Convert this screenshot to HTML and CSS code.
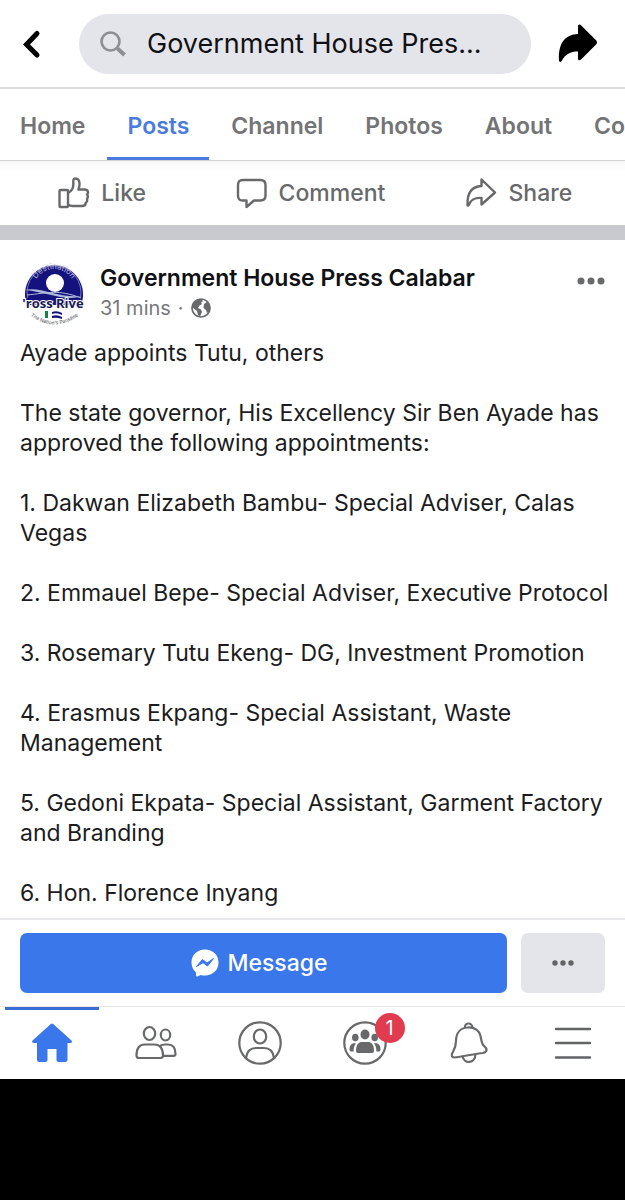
FILE: index.html
```html
<!DOCTYPE html>
<html lang="en">
<head>
    <meta charset="UTF-8">
    <meta name="viewport" content="width=device-width, initial-scale=1.0">
    <title>Government House Press Calabar - Posts</title>
    <link rel="stylesheet" href="styles.css">
</head>
<body>
    <div class="app">
        <header class="topbar">
            <button type="button" class="icon-button" aria-label="Back">
                <svg width="24" height="32" viewBox="0 0 24 32" fill="none" stroke="#000" stroke-width="5" stroke-linecap="round" stroke-linejoin="miter"><path d="M17 5.5L6.500 16.500L17 27"/></svg>
            </button>
            <label class="search">
                <svg width="28" height="28" viewBox="0 0 28 28" fill="none" stroke="#8d8e93"><circle cx="11.500" cy="11.500" r="9" stroke-width="2.600"/><path d="M18.500 18.500L25.500 25" stroke-width="4"/></svg>
                <input type="text" value="Government House Pres..." aria-label="Search">
            </label>
            <button type="button" class="icon-button" aria-label="Share page">
                <svg width="40" height="40" viewBox="0 0 40 40"><path d="M1 36.500C0 18 8 10.500 20 10V2.500C20 .6 21.500 0 23 1.300L38.300 16.600Q40 18.500 38.300 20.300L23.300 35.300C21.500 37 20 36.300 20 34.500V27.500C12 27.500 7.500 30 3.700 37Q1.500 39 1 36.500Z"/></svg>
            </button>
        </header>

        <nav class="tabs">
            <a href="#">Home</a>
            <a href="#" class="active">Posts</a>
            <a href="#">Channel</a>
            <a href="#">Photos</a>
            <a href="#">About</a>
            <a href="#">Community</a>
        </nav>

        <main>
            <div class="actions">
                <button type="button">
                    <svg width="32" height="32" viewBox="0 0 32 32" fill="none" stroke="#68696b" stroke-width="2.400" stroke-linejoin="round"><rect x="1.500" y="13" width="8.500" height="17" rx="1"/><path d="M10 16C13.500 14 15.300 10.800 15.300 8V4.500Q15.300 1.500 17.500 1.500C20.300 1.500 21.500 3.800 21.500 7Q21.500 9.500 20.500 12.500H27Q30 12.700 30 15.700Q29.800 17 29 17.500Q30.800 19.500 29 22Q29.700 24.500 27.700 26Q27.700 29 24 29H14.500Q12 29 10 27.500"/></svg>
                    Like
                </button>
                <button type="button">
                    <svg width="32" height="32" viewBox="0 0 32 32" fill="none" stroke="#68696b" stroke-width="2.400" stroke-linejoin="round"><path d="M6.500 3H24.500Q29.500 3 29.500 8V18.500Q29.500 23.500 24.500 23.500H18L10.500 30V23.500H6.500Q2 23.500 2 18.500V8Q2 3 6.500 3Z"/></svg>
                    Comment
                </button>
                <button type="button">
                    <svg width="32" height="32" viewBox="0 0 32 32" fill="none" stroke="#68696b" stroke-width="2.400" stroke-linejoin="round"><path d="M2.500 28C2 15 8 9.500 16.500 9V2.500L30 15.500L16.500 27.500V21C10 20.500 6.500 22 4 27.500Q3 29.500 2.500 28Z"/></svg>
                    Share
                </button>
            </div>

            <article class="post">
                <div class="post-header">
                    <svg class="avatar" width="66" height="68" viewBox="0 0 66 68">
                        <defs>
                            <path id="arc-top" d="M13 30A21 21 0 0 1 55 30"/>
                            <path id="arc-bottom" d="M11 56Q34 73 58 56"/>
                        </defs>
                        <circle cx="34" cy="34" r="31" fill="#fafafa"/>
                        <path d="M7 45A29 29 0 1 1 61 45Z" fill="#14127d"/>
                        <path d="M7.500 38A27 27 0 1 1 60.500 38" fill="none" stroke="#7776b5" stroke-width="1"/>
                        <circle cx="35" cy="23" r="9" fill="#fff"/>
                        <path d="M5 30C20 26 37 38 61 36C47 42 26 32 5 30Z" fill="#aebbdc"/>
                        <path d="M7 35C28 33 38 29 61 38" fill="none" stroke="#aebbdc" stroke-width="1"/>
                        <text class="avatar-arc light"><textPath href="#arc-top" startOffset="50%" text-anchor="middle">Destination</textPath></text>
                        <text class="avatar-name" x="33" y="48" text-anchor="middle">'ross Rive</text>
                        <path d="M25 51H28V58H25Z" fill="#178048"/>
                        <path d="M32 52Q37 50 42 53V55Q37 52 32 54ZM32 56Q37 54 42 57V59Q37 57 32 58Z" fill="#14127d"/>
                        <text class="avatar-arc small"><textPath href="#arc-bottom" startOffset="50%" text-anchor="middle">The Nation's Paradise</textPath></text>
                    </svg>
                    <div class="post-author">
                        <h1>Government House Press Calabar</h1>
                        <p>31 mins <span>·</span>
                            <svg width="20" height="20" viewBox="0 0 20 20"><circle cx="10" cy="10" r="9" fill="#fff" stroke="#68696b" stroke-width="1.700"/><path d="M2 6Q5 1 10 1L12 3L10 4.500L11 6L8.500 7.500L7 10L10 11.500L11 14L9 18.500L7 17L6 13L2 10Z" fill="#68696b"/><path d="M13 6L16 4L19 8L18.500 13L16 15L15 12L12.500 10Z" fill="#68696b"/></svg>
                        </p>
                    </div>
                    <button type="button" class="icon-button" aria-label="Post options">
                        <svg width="28" height="8" viewBox="0 0 28 8" fill="#68696b"><circle cx="4" cy="4" r="3.500"/><circle cx="14" cy="4" r="3.500"/><circle cx="24" cy="4" r="3.500"/></svg>
                    </button>
                </div>

                <div class="post-text">
                    <p>Ayade appoints Tutu, others</p>
                    <p>The state governor, His Excellency Sir Ben Ayade has approved the following appointments:</p>
                    <p>1. Dakwan Elizabeth Bambu- Special Adviser, Calas Vegas</p>
                    <p>2. Emmauel Bepe- Special Adviser, Executive Protocol</p>
                    <p>3. Rosemary Tutu Ekeng- DG, Investment Promotion</p>
                    <p>4. Erasmus Ekpang- Special Assistant, Waste Management</p>
                    <p>5. Gedoni Ekpata- Special Assistant, Garment Factory and Branding</p>
                    <p>6. Hon. Florence Inyang</p>
                </div>
            </article>
        </main>

        <div class="message-bar">
            <button type="button" class="message-button">
                <svg width="28" height="28" viewBox="0 0 28 28"><path d="M14 .5C21.800 .5 27.500 6 27.500 13.500S21.800 26.500 14 26.500Q11.500 26.500 9.500 25.900L6.500 27.400Q5 27.800 5 26.200V23.500Q.5 19.500 .5 13.500C.5 6 6.200 .5 14 .5Z" fill="#fff"/><path d="M5.500 17.500L11.500 10.500L16 14L22.500 9.500L16.500 17L12 13.700Z" fill="#3a77ea" stroke="#3a77ea" stroke-width="1" stroke-linejoin="round"/></svg>
                Message
            </button>
            <button type="button" class="more-button" aria-label="More">
                <svg width="22" height="6" viewBox="0 0 22 6" fill="#626365"><circle cx="3" cy="3" r="2.700"/><circle cx="11" cy="3" r="2.700"/><circle cx="19" cy="3" r="2.700"/></svg>
            </button>
        </div>

        <nav class="bottom-nav">
            <a href="#" class="active" aria-label="Home">
                <svg width="44" height="44" viewBox="0 0 44 44" fill="#3a77ea"><path d="M20.800 3Q22 2 23.200 3L41.500 19.500Q42.800 21.800 40.500 22H37.500V38.500Q37.500 41 35 41H29Q26.500 41 26.500 38.500V28H17.500V38.500Q17.500 41 15 41H9.500Q7 41 7 38.500V22H4Q1.200 21.800 2.500 19.500Z"/></svg>
            </a>
            <a href="#" aria-label="Friends">
                <svg width="44" height="44" viewBox="0 0 44 44" fill="none" stroke="#68696b" stroke-width="2.200"><ellipse cx="15.500" cy="12.500" rx="5.700" ry="6.500"/><ellipse cx="31.500" cy="14" rx="4.700" ry="5.500"/><path d="M5 37Q2.500 37 2.500 34.500C2.500 27 6 23.500 11 23.500H20C25.500 23.500 29 27 29 34.500Q29 37 26.500 37Z"/><path d="M26 25Q28 23.500 31 23.500H34C39 23.500 41.500 27 41.500 33Q41.500 34.800 39.500 34.800H29"/></svg>
            </a>
            <a href="#" aria-label="Profile">
                <svg width="44" height="44" viewBox="0 0 44 44" fill="none" stroke="#68696b" stroke-width="2.200"><circle cx="22" cy="22" r="20.700"/><ellipse cx="22" cy="15.500" rx="6.200" ry="7"/><path d="M8 37C9 29.500 13 27 18 27H26C31 27 35 29.500 36 37"/></svg>
            </a>
            <a href="#" aria-label="Groups">
                <span class="badge-wrap">
                    <svg width="44" height="44" viewBox="0 0 44 44" fill="#68696b"><circle cx="22" cy="22" r="20.700" fill="none" stroke="#68696b" stroke-width="2.200"/><ellipse cx="22" cy="13.500" rx="4.500" ry="5"/><ellipse cx="12.300" cy="16.500" rx="3.300" ry="3.800"/><ellipse cx="31.700" cy="16.500" rx="3.300" ry="3.800"/><path d="M13 30C13 23 16 21 19 21H25C28 21 31 23 31 30Q31 32 29 32H15Q13 32 13 30Z"/><path d="M13 22.500C11 25 10.500 27 10.700 30.500H8Q6.500 30.500 6.500 28.500C6.500 24 9 21.500 13 22.500ZM31 22.500C33 25 33.500 27 33.300 30.500H36Q37.500 30.500 37.500 28.500C37.500 24 35 21.500 31 22.500Z"/></svg>
                    <span class="badge">1</span>
                </span>
            </a>
            <a href="#" aria-label="Notifications">
                <svg width="44" height="44" viewBox="0 0 44 44" fill="none" stroke="#68696b" stroke-width="2.200" stroke-linejoin="round"><path d="M7 36.500Q4 36.200 5 32.500C7 29 9 27 9 20C9 12 13.500 7 20.500 6.500C28 6 32.500 10 33.500 15C35 23 35.500 24 38.500 26.500C41 29.500 38.500 31.500 36 32C27 33 16 35.500 7 36.500Z"/><path d="M18 7C17 1 25 1 25.500 7M15.500 35C17 43.500 28 43 28.500 33"/></svg>
            </a>
            <a href="#" aria-label="Menu">
                <svg width="44" height="44" viewBox="0 0 44 44" stroke="#626365" stroke-width="2.400" stroke-linecap="round"><path d="M5 8H39M5 22H39M5 36.500H39"/></svg>
            </a>
        </nav>
    </div>
</body>
</html>
```
FILE: styles.css
```css
* {
    box-sizing: border-box;
}

body {
    margin: 0;
    background: #000;
    color: #1c1c1e;
    font-family: Inter, "Liberation Sans", sans-serif;
    font-size: 23px;
    line-height: 30px;
}

h1,
p {
    margin: 0;
}

button {
    border: none;
    padding: 0;
    background: none;
    font: inherit;
    color: inherit;
    cursor: pointer;
}

a {
    color: inherit;
    text-decoration: none;
}

svg {
    display: block;
    flex: none;
}

.app {
    background: #fff;
    overflow: hidden;
}

.icon-button {
    flex: none;
}

/* top bar */
.topbar {
    display: flex;
    align-items: center;
    gap: 27px;
    padding: 14px 27px 13px 20px;
    border-bottom: 2px solid #dcdcde;
}

.topbar .icon-button:first-child {
    margin-right: 8px;
}

.search {
    flex: 1;
    min-width: 0;
    display: flex;
    align-items: center;
    gap: 20px;
    height: 60px;
    padding: 0 20px;
    border-radius: 30px;
    background: #e4e5eb;
}

.search input {
    flex: 1;
    min-width: 0;
    border: none;
    outline: none;
    padding: 0;
    background: none;
    font: inherit;
    font-size: 27px;
    color: #101114;
}

/* page tabs */
.tabs {
    display: flex;
    gap: 2px;
    overflow: hidden;
    border-bottom: 1px solid #d2d2d4;
    font-weight: 600;
    color: #737476;
}

.tabs a {
    flex: none;
    padding: 22px 20px 16px;
    border-bottom: 3px solid transparent;
}

.tabs a.active {
    color: #4c7be0;
    border-color: #4c7be0;
}

.actions {
    display: grid;
    grid-template-columns: repeat(3, 1fr);
    padding: 16px 0;
    background: linear-gradient(#f6f6f6, #fff 10px);
    border-bottom: 15px solid #c9cad0;
    font-weight: 500;
    color: #68696b;
}

.actions button {
    display: flex;
    align-items: center;
    justify-content: center;
    gap: 11px;
    padding-right: 4px;
}

/* post */
.post {
    padding: 20px 12px 10px 20px;
}

.post-header {
    display: flex;
    align-items: flex-start;
    gap: 14px;
    padding-right: 8px;
}

.post-author {
    flex: 1;
    padding-top: 3px;
}

.post-author h1 {
    font-size: 23px;
    font-weight: 600;
    color: #101114;
}

.post-author p {
    display: flex;
    align-items: center;
    gap: 7px;
    font-size: 20px;
    color: #77787b;
}

.post-header .icon-button {
    padding-top: 17px;
}

.avatar-arc {
    font-size: 8px;
}

.avatar-arc.light {
    fill: #b9b9dc;
}

.avatar-arc.small {
    font-size: 5px;
    fill: #55565c;
}

.avatar-name {
    font-family: "Open Sans", sans-serif;
    font-size: 13px;
    font-weight: 700;
    fill: #1b1b55;
    stroke: #fff;
    stroke-width: 2px;
    paint-order: stroke;
}

.post-text {
    display: flex;
    flex-direction: column;
    gap: 30px;
    padding-top: 10px;
}

/* message bar */
.message-bar {
    display: flex;
    gap: 14px;
    padding: 13px 20px;
    border-top: 2px solid #e8e8ea;
}

.message-button,
.more-button {
    display: flex;
    align-items: center;
    justify-content: center;
    height: 60px;
    border-radius: 7px;
}

.message-button {
    flex: 1;
    gap: 8px;
    padding-right: 8px;
    background: #3a77ea;
    color: #fff;
    font-weight: 500;
}

.more-button {
    width: 84px;
    background: #e4e5ea;
}

/* bottom navigation */
.bottom-nav {
    display: grid;
    grid-template-columns: repeat(6, 1fr);
    border-top: 1px solid #e8e6e6;
}

.bottom-nav a {
    display: flex;
    justify-content: center;
    margin: 0 5px;
    padding: 11px 0 14px;
    border-top: 3px solid transparent;
}

.bottom-nav a.active {
    border-color: #3a6bd6;
}

.badge-wrap {
    position: relative;
}

.badge {
    position: absolute;
    top: -8px;
    right: -18px;
    width: 30px;
    height: 30px;
    border-radius: 50%;
    background: #e03b4f;
    color: #fff;
    font-size: 20px;
    text-align: center;
}
```
